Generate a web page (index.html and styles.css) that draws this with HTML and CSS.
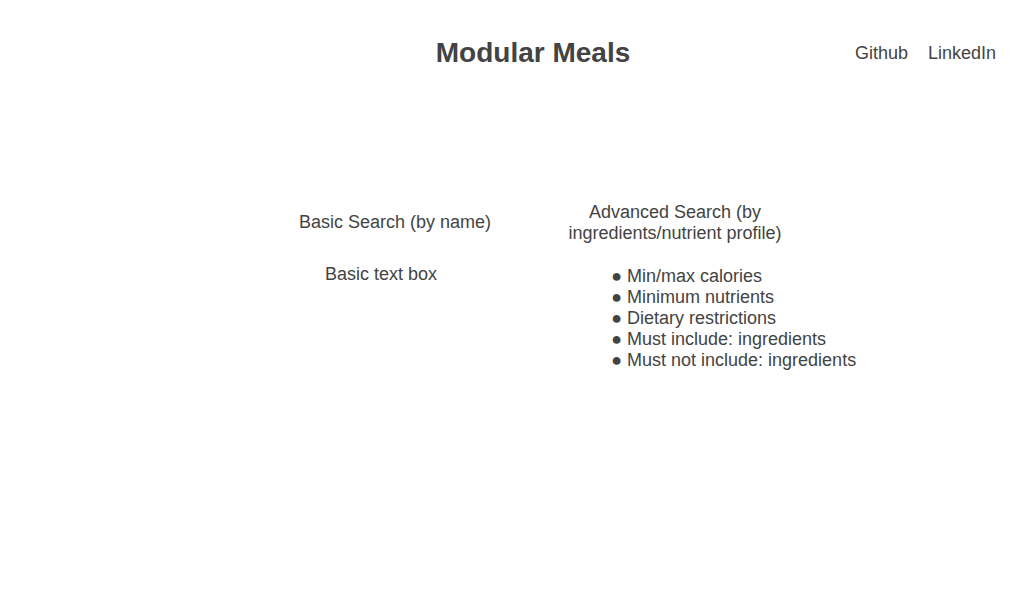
FILE: index.html
```html
<!DOCTYPE html>
<html lang="en">
<head>
<meta charset="utf-8">
<title>Modular Meals</title>
<link rel="stylesheet" href="styles.css">
</head>
<body>
<header class="header">
  <h1 class="title">Modular Meals</h1>
  <nav class="links">
    <a class="link" href="#github">Github</a>
    <a class="link" href="#linkedin">LinkedIn</a>
  </nav>
</header>
<main class="searches">
  <section class="search">
    <h2 class="heading">Basic Search (by name)</h2>
    <p class="note">Basic text box</p>
  </section>
  <section class="search">
    <h2 class="heading">Advanced Search (by ingredients/nutrient profile)</h2>
    <ul class="options">
      <li>Min/max calories</li>
      <li>Minimum nutrients</li>
      <li>Dietary restrictions</li>
      <li>Must include: ingredients</li>
      <li>Must not include: ingredients</li>
    </ul>
  </section>
</main>
</body>
</html>
```
FILE: styles.css
```css
* {
  box-sizing: border-box;
}

body {
  margin: 0;
  background: #fff;
  color: #434343;
  font: 18px/21px "Liberation Sans", Arial, sans-serif;
}

.header {
  display: grid;
  grid-template-columns: 1fr auto 1fr;
  align-items: center;
  padding: 36px 28px 0 70px;
}

.title {
  grid-column: 2;
  margin: 0;
  font-size: 28px;
  line-height: 34px;
}

.links {
  display: flex;
  justify-content: flex-end;
  gap: 20px;
}

.link {
  color: inherit;
  text-decoration: none;
}

.searches {
  display: flex;
  justify-content: center;
  gap: 60px;
  padding: 132px 0 0 46px;
}

.search {
  width: 220px;
}

.heading {
  display: flex;
  align-items: center;
  justify-content: center;
  min-height: 40px;
  margin: 0;
  font-size: 18px;
  font-weight: 400;
  text-align: center;
}

.note {
  margin: 22px 0 0 40px;
}

.options {
  margin: 22px 0 0;
  padding-left: 62px;
  list-style-type: "● ";
  white-space: nowrap;
}
```
